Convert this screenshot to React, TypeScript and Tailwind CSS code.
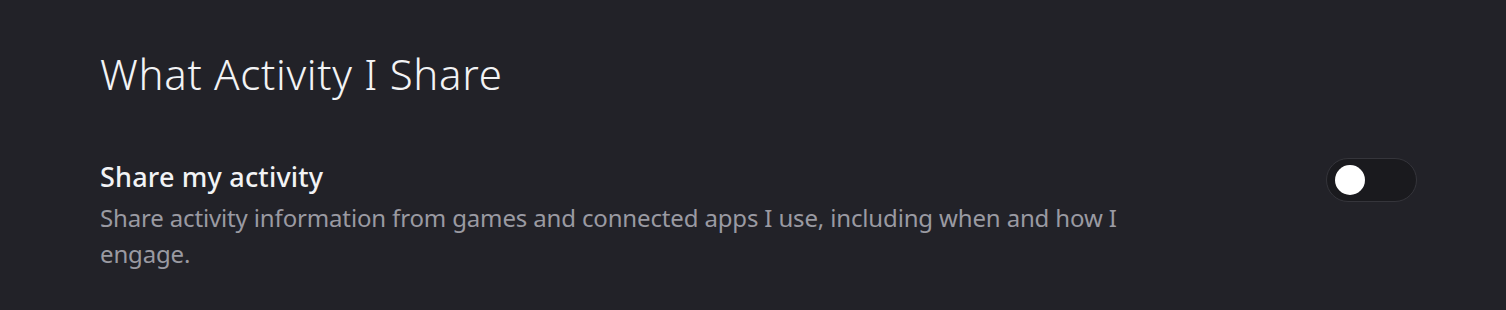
import { useState } from 'react';

export default function App() {
  const [on, setOn] = useState(false);

  return (
    <div className="min-h-[310px] w-full bg-[#222228] px-[100px] pt-[48px] font-['Noto_Sans',sans-serif]">
      <h1 className="text-[42px] leading-[52px] font-light tracking-[0.7px] text-[#f2f3f5]">What Activity I Share</h1>

      <div className="mt-[60px] flex items-start justify-between">
        <div className="max-w-[1040px]">
          <div className="text-[27px] leading-[34px] font-medium tracking-[0.2px] text-[#f2f3f5]">Share my activity</div>
          <p className="mt-[6px] text-[24px] leading-[36px] tracking-[-0.15px] text-[#9a9aa2]">
            Share activity information from games and connected apps I use, including when and how I engage.
          </p>
        </div>

        <button
          onClick={() => setOn(!on)}
          className={`mt-[-2px] mr-[-11px] flex h-[44px] w-[91px] shrink-0 items-center rounded-full border border-[#35353b] px-[8px] ${on ? 'justify-end bg-[#5865f2]' : 'justify-start bg-[#1a1a1e]'}`}
        >
          <span className="block h-[30px] w-[30px] rounded-full bg-white" />
        </button>
      </div>
    </div>
  );
}
